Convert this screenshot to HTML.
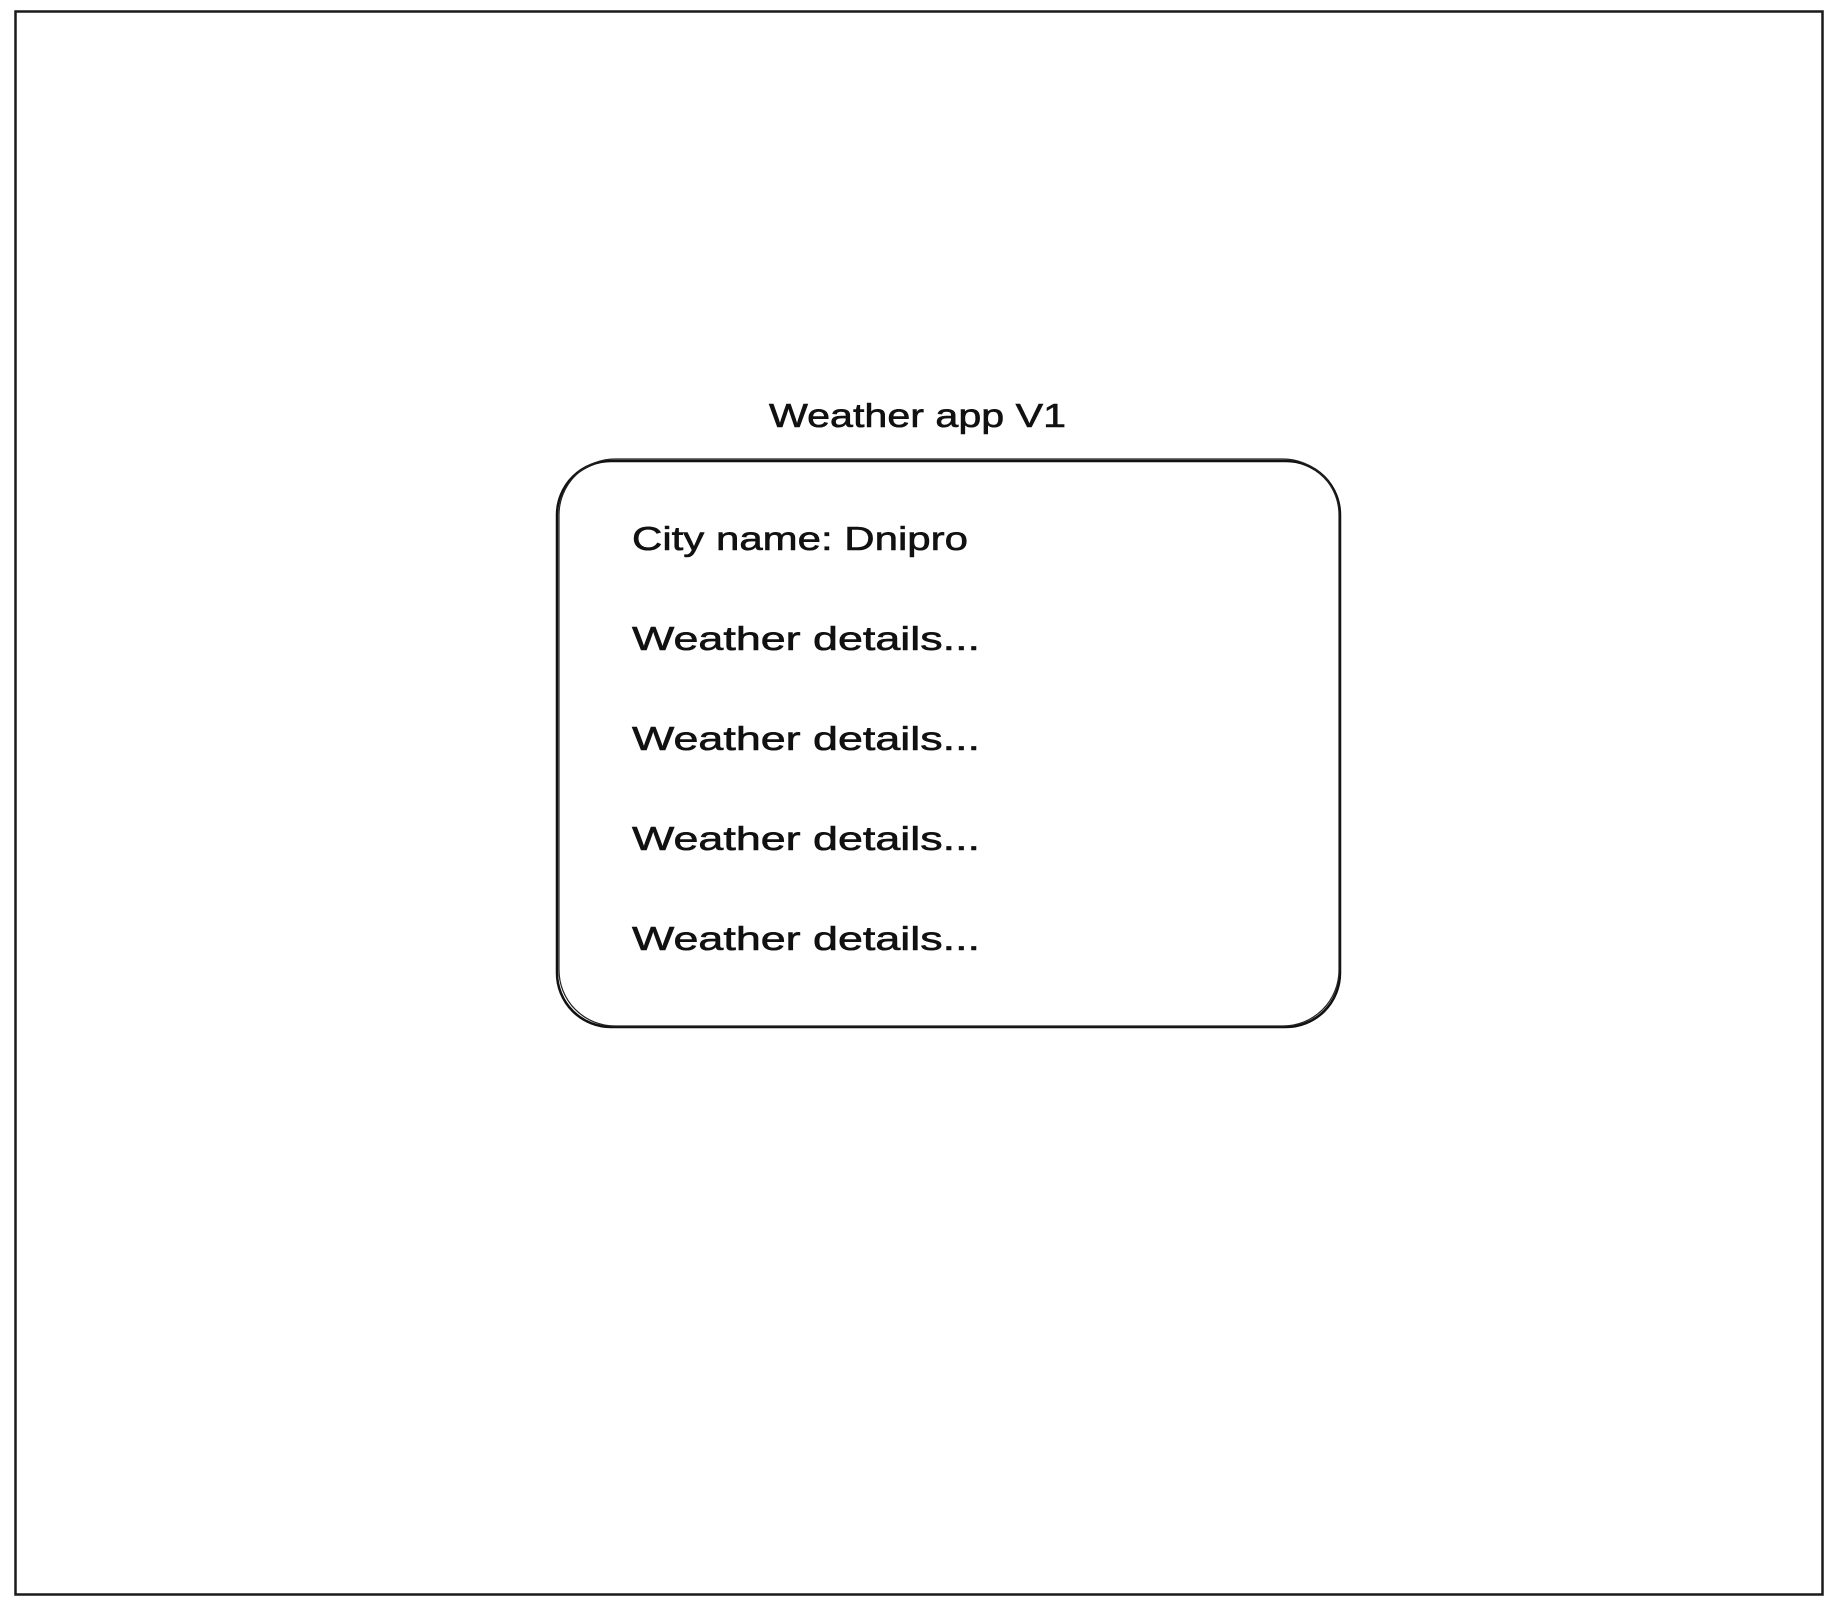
<!DOCTYPE html>
<html><head><meta charset="utf-8"><style>
html,body{margin:0;padding:0;background:#fff;}
svg{display:block}
text{font-family:"Liberation Sans",sans-serif;font-size:33px;fill:#111;stroke:#111;stroke-width:0.6px;}
</style></head><body>
<svg width="1840" height="1608" viewBox="0 0 1840 1608" xmlns="http://www.w3.org/2000/svg">
<rect x="0" y="0" width="1840" height="1608" fill="#fff"/>
<rect x="15.5" y="11.5" width="1807" height="1583" fill="none" stroke="#1a1a1a" stroke-width="2.5"/>
<rect x="557" y="461" width="783" height="566" rx="54" ry="54" fill="none" stroke="#111" stroke-width="2.5"/>
<rect x="559" y="459" width="780" height="567" rx="56" ry="56" fill="none" stroke="#222" stroke-width="1.2"/>
<text x="769" y="427" textLength="297" lengthAdjust="spacingAndGlyphs">Weather app V1</text>
<text x="632" y="550" textLength="336" lengthAdjust="spacingAndGlyphs">City name: Dnipro</text>
<text x="632" y="650" textLength="348" lengthAdjust="spacingAndGlyphs">Weather details...</text>
<text x="632" y="750" textLength="348" lengthAdjust="spacingAndGlyphs">Weather details...</text>
<text x="632" y="850" textLength="348" lengthAdjust="spacingAndGlyphs">Weather details...</text>
<text x="632" y="950" textLength="348" lengthAdjust="spacingAndGlyphs">Weather details...</text>
</svg>
</body></html>
